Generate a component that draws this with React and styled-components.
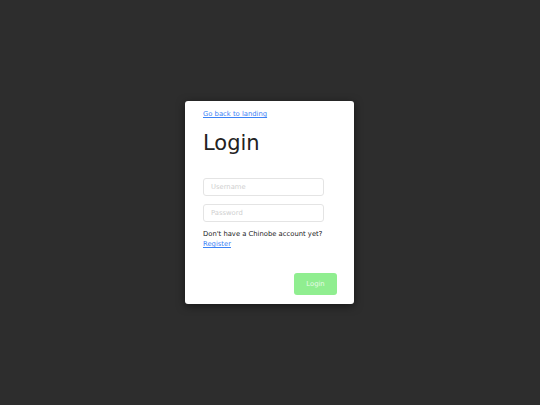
import React from "react";
import styled, { createGlobalStyle } from "styled-components";

const Global = createGlobalStyle`
  html, body { margin: 0; padding: 0; height: 100%; }
  body { background: #2d2d2d; font-family: "DejaVu Sans", sans-serif; }
  #root { height: 100%; }
`;

const Page = styled.div`
  height: 405px;
  box-sizing: border-box;
  padding-right: 1px;
  display: flex;
  align-items: center;
  justify-content: center;
`;

const Card = styled.div`
  width: 169px;
  box-sizing: border-box;
  background: #fff;
  border-radius: 3px;
  box-shadow: 0 2px 8px rgba(0,0,0,0.5);
  padding: 8px 17px 9px 18px;
  display: flex;
  flex-direction: column;
`;

const Link = styled.a`
  color: #3b82f6;
  font-size: 6.8px;
  text-decoration: underline;
  cursor: pointer;
  line-height: 10px;
`;

const Title = styled.h1`
  margin: 12px 0 0;
  font-size: 21px;
  font-weight: 400;
  color: #222;
  line-height: 25px;
`;

const Form = styled.div`
  margin-top: 22px;
  display: flex;
  flex-direction: column;
  gap: 8px;
`;

const Input = styled.input`
  width: 121px;
  height: 18px;
  box-sizing: border-box;
  border: 1px solid #e4e4e4;
  border-radius: 3px;
  padding: 0 7px;
  font-family: "DejaVu Sans", sans-serif;
  font-size: 6.8px;
  outline: none;
  &::placeholder { color: #cfcfcf; }
`;

const Note = styled.p`
  margin: 7px 0 0;
  font-size: 6.8px;
  line-height: 10px;
  color: #222;
`;

const Actions = styled.div`
  margin-top: 24px;
  display: flex;
  justify-content: flex-end;
`;

const Button = styled.button`
  width: 43px;
  height: 22px;
  border: none;
  border-radius: 3px;
  background: #90ee90;
  color: #e8fbe8;
  font-family: "DejaVu Sans", sans-serif;
  font-size: 6.8px;
  padding: 0;
`;

export default function App() {
  return (
    <>
      <Global />
      <Page>
        <Card>
          <Link>Go back to landing</Link>
          <Title>Login</Title>
          <Form>
            <Input placeholder="Username" />
            <Input placeholder="Password" type="password" />
          </Form>
          <Note>
            Don't have a Chinobe account yet?
            <br />
            <Link>Register</Link>
          </Note>
          <Actions>
            <Button>Login</Button>
          </Actions>
        </Card>
      </Page>
    </>
  );
}
